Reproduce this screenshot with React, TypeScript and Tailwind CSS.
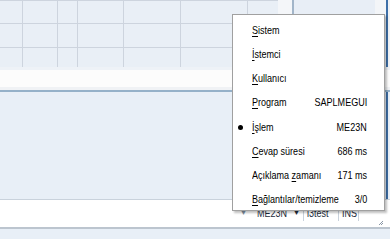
import React from "react";

const font = "font-['Liberation_Sans',Arial,sans-serif]";
// the reference text is a tall narrow face; Liberation Sans squeezed to 82% matches its widths
const narrowL = "inline-block origin-left scale-x-[0.82]";
const narrowR = "inline-block origin-right scale-x-[0.82]";

const colWidths = ["w-[23px]", "w-[35px]", "w-[20px]", "w-[46px]", "w-[57px]", "w-[67px]", "w-[30px]"];

function GridRow({ height }: { height: string }) {
  return (
    <div className={`flex ${height} border-t border-[#cdd4de]`}>
      {colWidths.map((w, i) => (
        <div key={i} className={`${w} h-full ${i < colWidths.length - 1 ? "border-r border-[#cdd4de]" : ""}`} />
      ))}
    </div>
  );
}

interface MenuItem {
  before?: string;
  key: string;
  after: string;
  value?: string;
  active?: boolean;
}

const items: MenuItem[] = [
  { key: "S", after: "istem" },
  { key: "İ", after: "stemci" },
  { key: "K", after: "ullanıcı" },
  { key: "P", after: "rogram", value: "SAPLMEGUI" },
  { key: "İ", after: "şlem", value: "ME23N", active: true },
  { key: "C", after: "evap süresi", value: "686 ms" },
  { before: "Açıklama ", key: "z", after: "amanı", value: "171 ms" },
  { key: "B", after: "ağlantılar/temizleme", value: "3/0" },
];

function ContextMenu() {
  return (
    <div className={`absolute left-[232px] top-[14px] w-[153px] h-[197px] bg-white border border-[#a0a0a0] shadow-[2px_2px_2px_rgba(0,0,0,0.25)] ${font} text-[11px] text-black`}>
      {items.map((it, i) => (
        <div key={i} className="relative flex items-center h-[24.25px] pt-[6px] pl-[19px] pr-[17px] whitespace-nowrap">
          {it.active && <span className="absolute left-[5px] top-[13px] w-[5px] h-[5px] rounded-full bg-black" />}
          <span className={`${narrowL} min-w-0 flex-1 leading-none`}>
            {it.before}
            <span className="underline underline-offset-[2px]">{it.key}</span>
            {it.after}
          </span>
          {it.value && <span className={`${narrowR} shrink-0 leading-none`}>{it.value}</span>}
        </div>
      ))}
    </div>
  );
}

function StatusBar() {
  return (
    <div className={`flex items-center h-[30px] bg-white border-t border-[#c9d2dc] border-b-2 border-b-[#bcc5cf] ${font} text-[11px] text-[#1c2a3a] whitespace-nowrap`}>
      <div className="flex items-center h-full pl-[240px]">
        <span className="text-[7px] text-[#7f8fa0] w-[17px]">▼</span>
        <span className="w-[36px]"><span className={narrowL}>ME23N</span></span>
        <span className="text-[7px] w-[10px]">▼</span>
        <span className="w-px h-[14px] bg-[#c9d2dc] mr-[3px]" />
        <span className="w-[31px]"><span className={narrowL}>i3test</span></span>
        <span className="w-px h-[14px] bg-[#c9d2dc] mr-[3px]" />
        <span className="w-[16px]"><span className={narrowL}>INS</span></span>
        <span className="w-px h-[14px] bg-[#c9d2dc]" />
      </div>
      <svg className="ml-auto mr-[6px] self-end mb-[1px]" width="6" height="6" viewBox="0 0 6 6">
        <path d="M5 1 L1 5 M5 3 L3 5" stroke="#8a97a6" strokeWidth="1" />
      </svg>
    </div>
  );
}

export default function App() {
  return (
    <div className="relative w-[390px] h-[239px] overflow-hidden bg-[#e8eff7] flex flex-col">
      <div className="flex h-[67px]">
        <div className="w-[278px] bg-[#e9eff6]">
          <GridRow height="h-[23px]" />
          <GridRow height="h-[24px]" />
          <GridRow height="h-[20px]" />
        </div>
        <div className="w-[14px] bg-[#f4f6f9]" />
        <div className="w-[2px] bg-[#a2b5c9]" />
        <div className="w-[81px] bg-[#e8eef6]" />
        <div className="w-[11px] bg-[#f3f5f8]" />
        <div className="w-[2px] bg-[#3d6fa8]" />
        <div className="flex-1 bg-[#f0f2f5]" />
      </div>
      <div className="h-[3px] bg-[#eef2f7]" />
      <div className="h-[17px] bg-[#fcfcfc]" />
      <div className="h-[3px] bg-[#f0f2f5]" />
      <div className="h-[2px] bg-[#95b1c9]" />
      <div className="flex-1 flex">
        <div className="flex-1" />
        <div className="w-[2px] bg-[#3d6fa8] mr-[2px]" />
      </div>
      <StatusBar />
      <div className="h-[10px]" />
      <ContextMenu />
    </div>
  );
}
